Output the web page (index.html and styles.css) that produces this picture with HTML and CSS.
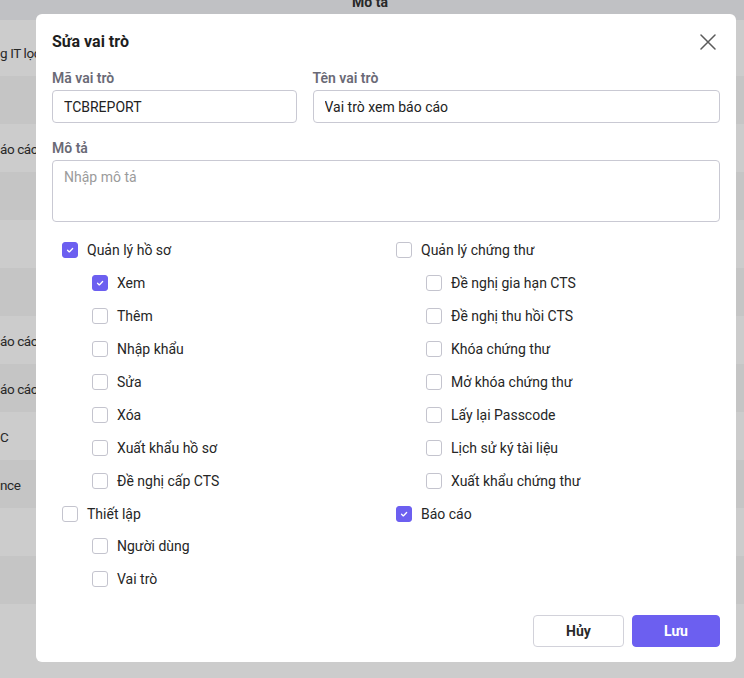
FILE: index.html
```html
<!DOCTYPE html>
<html lang="vi">
<head>
<meta charset="utf-8">
<title>Sửa vai trò</title>
<link rel="stylesheet" href="styles.css">
</head>
<body>
<div class="page">
  <div class="bg-table">
    <div class="bg-head"><span class="bg-head-text">Mô tả</span></div>
    <div class="bg-rows">
      <div class="bg-row first"><span>g IT lọc</span></div>
      <div class="bg-row alt"><span></span></div>
      <div class="bg-row"><span>áo cáo</span></div>
      <div class="bg-row alt"><span></span></div>
      <div class="bg-row"><span></span></div>
      <div class="bg-row alt"><span></span></div>
      <div class="bg-row"><span>áo cáo</span></div>
      <div class="bg-row alt"><span>áo cáo</span></div>
      <div class="bg-row"><span>C</span></div>
      <div class="bg-row alt"><span>nce</span></div>
      <div class="bg-row"><span></span></div>
      <div class="bg-row alt"><span></span></div>
      <div class="bg-row"><span></span></div>
    </div>
  </div>
  <div class="backdrop"></div>

  <div class="modal">
    <div class="modal-header">
      <h2 class="modal-title">Sửa vai trò</h2>
      <button class="close-btn" type="button" aria-label="Đóng">
        <svg width="16" height="16" viewBox="0 0 16 16"><path d="M1 1L15 15M15 1L1 15" stroke="#5b5b5b" stroke-width="1.5" fill="none" stroke-linecap="round"/></svg>
      </button>
    </div>

    <div class="field-row">
      <div class="field">
        <label class="field-label">Mã vai trò</label>
        <input class="input" type="text" value="TCBREPORT">
      </div>
      <div class="field">
        <label class="field-label">Tên vai trò</label>
        <input class="input" type="text" value="Vai trò xem báo cáo">
      </div>
    </div>

    <div class="field field-desc">
      <label class="field-label">Mô tả</label>
      <textarea class="textarea" placeholder="Nhập mô tả"></textarea>
    </div>

    <div class="perm-grid">
      <div class="group">
        <div class="cb-row"><span class="cb checked"><svg width="16" height="16" viewBox="0 0 16 16"><path d="M5.2 8.3l2 1.9 3.8-4" stroke="#fff" stroke-width="1.5" fill="none" stroke-linecap="round" stroke-linejoin="round"/></svg></span><span class="cb-label">Quản lý hồ sơ</span></div>
        <div class="cb-row sub"><span class="cb checked"><svg width="16" height="16" viewBox="0 0 16 16"><path d="M5.2 8.3l2 1.9 3.8-4" stroke="#fff" stroke-width="1.5" fill="none" stroke-linecap="round" stroke-linejoin="round"/></svg></span><span class="cb-label">Xem</span></div>
        <div class="cb-row sub"><span class="cb"></span><span class="cb-label">Thêm</span></div>
        <div class="cb-row sub"><span class="cb"></span><span class="cb-label">Nhập khẩu</span></div>
        <div class="cb-row sub"><span class="cb"></span><span class="cb-label">Sửa</span></div>
        <div class="cb-row sub"><span class="cb"></span><span class="cb-label">Xóa</span></div>
        <div class="cb-row sub"><span class="cb"></span><span class="cb-label">Xuất khẩu hồ sơ</span></div>
        <div class="cb-row sub"><span class="cb"></span><span class="cb-label">Đề nghị cấp CTS</span></div>
      </div>
      <div class="group">
        <div class="cb-row"><span class="cb"></span><span class="cb-label">Quản lý chứng thư</span></div>
        <div class="cb-row sub"><span class="cb"></span><span class="cb-label">Đề nghị gia hạn CTS</span></div>
        <div class="cb-row sub"><span class="cb"></span><span class="cb-label">Đề nghị thu hồi CTS</span></div>
        <div class="cb-row sub"><span class="cb"></span><span class="cb-label">Khóa chứng thư</span></div>
        <div class="cb-row sub"><span class="cb"></span><span class="cb-label">Mở khóa chứng thư</span></div>
        <div class="cb-row sub"><span class="cb"></span><span class="cb-label">Lấy lại Passcode</span></div>
        <div class="cb-row sub"><span class="cb"></span><span class="cb-label">Lịch sử ký tài liệu</span></div>
        <div class="cb-row sub"><span class="cb"></span><span class="cb-label">Xuất khẩu chứng thư</span></div>
      </div>
      <div class="group">
        <div class="cb-row"><span class="cb"></span><span class="cb-label">Thiết lập</span></div>
        <div class="cb-row sub"><span class="cb"></span><span class="cb-label">Người dùng</span></div>
        <div class="cb-row sub"><span class="cb"></span><span class="cb-label">Vai trò</span></div>
      </div>
      <div class="group">
        <div class="cb-row"><span class="cb checked"><svg width="16" height="16" viewBox="0 0 16 16"><path d="M5.2 8.3l2 1.9 3.8-4" stroke="#fff" stroke-width="1.5" fill="none" stroke-linecap="round" stroke-linejoin="round"/></svg></span><span class="cb-label">Báo cáo</span></div>
      </div>
    </div>

    <div class="footer">
      <button class="btn btn-cancel" type="button">Hủy</button>
      <button class="btn btn-save" type="button">Lưu</button>
    </div>
  </div>
</div>
</body>
</html>
```

FILE: styles.css
```css
* { box-sizing: border-box; }

html, body {
  margin: 0;
  padding: 0;
  width: 744px;
  height: 678px;
  overflow: hidden;
  font-family: Roboto, "Liberation Sans", Arial, sans-serif;
  font-size: 14px;
  color: #222;
}

.page {
  position: relative;
  width: 744px;
  height: 678px;
  overflow: hidden;
  background: #ffffff;
}

/* background table (under the backdrop) */
.bg-table {
  display: flex;
  flex-direction: column;
}

.bg-head {
  height: 20px;
  background: #f0f2f6;
  display: flex;
  justify-content: center;
  overflow: hidden;
}

.bg-head-text {
  display: block;
  margin-top: -6px;
  margin-left: -4px;
  font-weight: 700;
  font-size: 14px;
  line-height: 16px;
  color: #333;
}

.bg-rows {
  display: flex;
  flex-direction: column;
}

.bg-row {
  height: 48px;
  display: flex;
  align-items: center;
  background: #ffffff;
  color: #333;
  font-size: 13.5px;
  letter-spacing: -0.4px;
  padding-top: 1px;
}

.bg-row.first {
  height: 56px;
  padding-top: 9px;
}

.bg-row.alt {
  background: #f7f7f7;
}

.backdrop {
  position: absolute;
  inset: 0;
  background: rgba(0, 0, 0, 0.2);
}

/* modal */
.modal {
  position: absolute;
  left: 36px;
  top: 14px;
  width: 700px;
  height: 648px;
  background: #fff;
  border-radius: 6px;
  padding: 16px 16px 15px;
  display: flex;
  flex-direction: column;
}

.modal-header {
  height: 24px;
  display: flex;
  align-items: center;
  justify-content: space-between;
  margin-bottom: 14px;
}

.modal-title {
  margin: 0;
  font-size: 16px;
  line-height: 22px;
  font-weight: 700;
  color: #1e1e1e;
}

.close-btn {
  width: 24px;
  height: 24px;
  padding: 0;
  border: 0;
  background: transparent;
  display: flex;
  align-items: center;
  justify-content: center;
}

.field-row {
  display: grid;
  grid-template-columns: 3fr 5fr;
  column-gap: 16px;
}

.field {
  display: flex;
  flex-direction: column;
}

.field-label {
  font-size: 14px;
  line-height: 20px;
  font-weight: 600;
  color: #6a6a76;
  margin-bottom: 2px;
}

.input {
  height: 33px;
  border: 1px solid #c9c9d3;
  border-radius: 4px;
  padding: 0 11px;
  font-family: inherit;
  font-size: 14px;
  color: #222;
  background: #fff;
  outline: none;
}

.field-desc {
  margin-top: 15px;
}

.textarea {
  height: 62px;
  border: 1px solid #c9c9d3;
  border-radius: 4px;
  padding: 6px 11px;
  font-family: inherit;
  font-size: 14px;
  line-height: 20px;
  color: #222;
  resize: none;
  outline: none;
}

.textarea::placeholder {
  color: #9b9b9b;
}

.perm-grid {
  margin-top: 12px;
  display: grid;
  grid-template-columns: 1fr 1fr;
}

.group {
  padding-left: 10px;
  display: flex;
  flex-direction: column;
}

.cb-row {
  height: 32.9px;
  display: flex;
  align-items: center;
  gap: 9px;
}

.cb-row.sub {
  padding-left: 30px;
}

.cb {
  width: 16px;
  height: 16px;
  flex: 0 0 16px;
  border: 1px solid #c4c4ce;
  border-radius: 3px;
  background: #fff;
  display: flex;
  align-items: center;
  justify-content: center;
}

.cb svg {
  display: block;
}

.cb.checked {
  background: #6c5ff0;
  border-color: #6c5ff0;
}

.cb-label {
  font-size: 14px;
  line-height: 20px;
  color: #262626;
}

.footer {
  margin-top: auto;
  display: flex;
  justify-content: flex-end;
  gap: 8px;
}

.btn {
  height: 32px;
  border-radius: 4px;
  font-family: inherit;
  font-size: 14px;
  font-weight: 700;
  padding: 0;
}

.btn-cancel {
  width: 91px;
  background: #fff;
  border: 1px solid #d2d2da;
  color: #2a2a2a;
}

.btn-save {
  width: 88px;
  background: #6c5ff0;
  border: 1px solid #6c5ff0;
  color: #fff;
}
```
